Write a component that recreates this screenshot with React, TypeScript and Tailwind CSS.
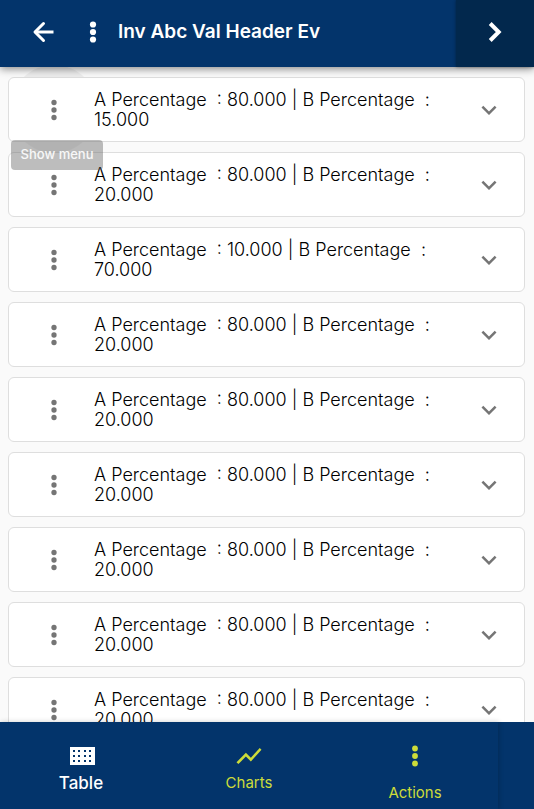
import React from "react";

const rows = [
  { a: "80.000", b: "15.000" },
  { a: "80.000", b: "20.000" },
  { a: "10.000", b: "70.000" },
  { a: "80.000", b: "20.000" },
  { a: "80.000", b: "20.000" },
  { a: "80.000", b: "20.000" },
  { a: "80.000", b: "20.000" },
  { a: "80.000", b: "20.000" },
  { a: "80.000", b: "20.000" },
];

function Dots({ r = 2.65 }: { r?: number }) {
  return (
    <svg width="30" height="30" viewBox="0 0 30 30" fill="currentColor" aria-hidden="true">
      <circle cx="15" cy="7.5" r={r} />
      <circle cx="15" cy="15" r={r} />
      <circle cx="15" cy="22.5" r={r} />
    </svg>
  );
}

function Row({ a, b, hovered }: { a: string; b: string; hovered: boolean }) {
  return (
    <li className="relative">
      {hovered && <span className="absolute -top-3 left-[2px] size-22 rounded-full bg-black/5" />}
      <div className="relative flex h-[65px] items-center rounded-md border border-[#dedede] bg-white">
        <button type="button" aria-label="Show menu" className="ml-[30px] shrink-0 text-[#757575]">
          <Dots />
        </button>
        <p className="ml-[25px] w-[350px] text-[18px] leading-5 font-light text-black">
          A Percentage&nbsp; : {a} | B Percentage&nbsp; :<br />
          {b}
        </p>
        <button type="button" aria-label="Expand" className="mr-5 ml-auto shrink-0 text-[#757575]">
          <svg width="30" height="30" viewBox="0 0 24 24" fill="currentColor" aria-hidden="true">
            <path d="M16.59 8.59 12 13.17 7.41 8.59 6 10l6 6 6-6z" />
          </svg>
        </button>
      </div>
      {hovered && (
        <span
          role="tooltip"
          className="absolute top-[63px] left-[3px] z-10 flex h-[30px] w-[92px] items-center justify-center rounded-[4px] bg-[#616161]/42 text-[13px] font-medium whitespace-nowrap text-white/90"
        >
          Show menu
        </span>
      )}
    </li>
  );
}

export default function App() {
  return (
    <div className="flex h-screen flex-col overflow-hidden bg-[#fafafa] font-['Inter','Liberation_Sans',sans-serif]">
      <header className="relative z-20 flex h-[67px] shrink-0 items-center bg-[#03346b] text-white shadow-[0_2px_8px_rgba(0,0,0,0.45)]">
        <button type="button" aria-label="Back" className="ml-7 pb-[3px]">
          <svg width="30" height="30" viewBox="0 0 30 30" fill="none" stroke="currentColor" strokeWidth="3" aria-hidden="true">
            <path d="M15.5 6.5 7 15l8.5 8.5" strokeLinecap="round" strokeLinejoin="round" />
            <path d="M7 15h18.5" />
          </svg>
        </button>
        <button type="button" aria-label="More options" className="ml-5 pb-[3px]">
          <Dots r={3.1} />
        </button>
        <h1 className="ml-[10px] grow pb-[3px] text-[19px] leading-6 font-semibold">Inv Abc Val Header Ev</h1>
        <button
          type="button"
          aria-label="Next"
          className="flex h-full w-[78px] items-center justify-center bg-[#02284d] pb-[3px] shadow-[0_0_3px_rgba(0,0,0,0.4)]"
        >
          <svg width="30" height="30" viewBox="0 0 30 30" fill="none" stroke="currentColor" strokeWidth="4" aria-hidden="true">
            <path d="m10.2 6.5 8.5 8.5-8.5 8.5" />
          </svg>
        </button>
      </header>

      <main className="min-h-0 grow overflow-hidden">
        <ul className="flex flex-col gap-[10px] pt-[10px] pr-[9px] pl-2">
          {rows.map((row, i) => (
            <Row key={i} a={row.a} b={row.b} hovered={i === 0} />
          ))}
        </ul>
      </main>

      <nav className="relative z-20 flex h-[87px] shrink-0 bg-[#03346b] text-[15px] leading-5 text-[#cddc39]">
        <div className="grid grow grid-cols-3 shadow-[1px_0_5px_rgba(0,0,0,0.2)]">
          <button type="button" className="flex flex-col items-center pt-[19px] pr-1 text-[17px] font-medium text-white">
            <svg width="30" height="30" viewBox="0 0 30 30" fill="currentColor" aria-hidden="true">
              <path
                fillRule="evenodd"
                d="M4 6h25v18H4zM7 9v2h2V9zM12 9v2h2V9zM18 9v2h2V9zM23 9v2h2V9zM7 14v2h2v-2zM12 14v2h2v-2zM18 14v2h2v-2zM23 14v2h2v-2zM7 19v2h2v-2zM12 19v2h2v-2zM18 19v2h2v-2zM23 19v2h2v-2z"
              />
            </svg>
            <span className="mt-[2px]">Table</span>
          </button>
          <button type="button" className="flex flex-col items-center pt-[19px]">
            <svg width="30" height="30" viewBox="0 0 24 24" fill="currentColor" aria-hidden="true">
              <path d="m3.5 18.49 6-6.01 4 4L22 6.92l-1.41-1.41-7.09 7.97-4-4L2 16.99z" />
            </svg>
            <span className="mt-[2px]">Charts</span>
          </button>
          <button type="button" className="flex flex-col items-center pt-[19px]">
            <Dots r={2.9} />
            <span className="mt-3">Actions</span>
          </button>
        </div>
        <div className="w-9 shrink-0" />
      </nav>
    </div>
  );
}
